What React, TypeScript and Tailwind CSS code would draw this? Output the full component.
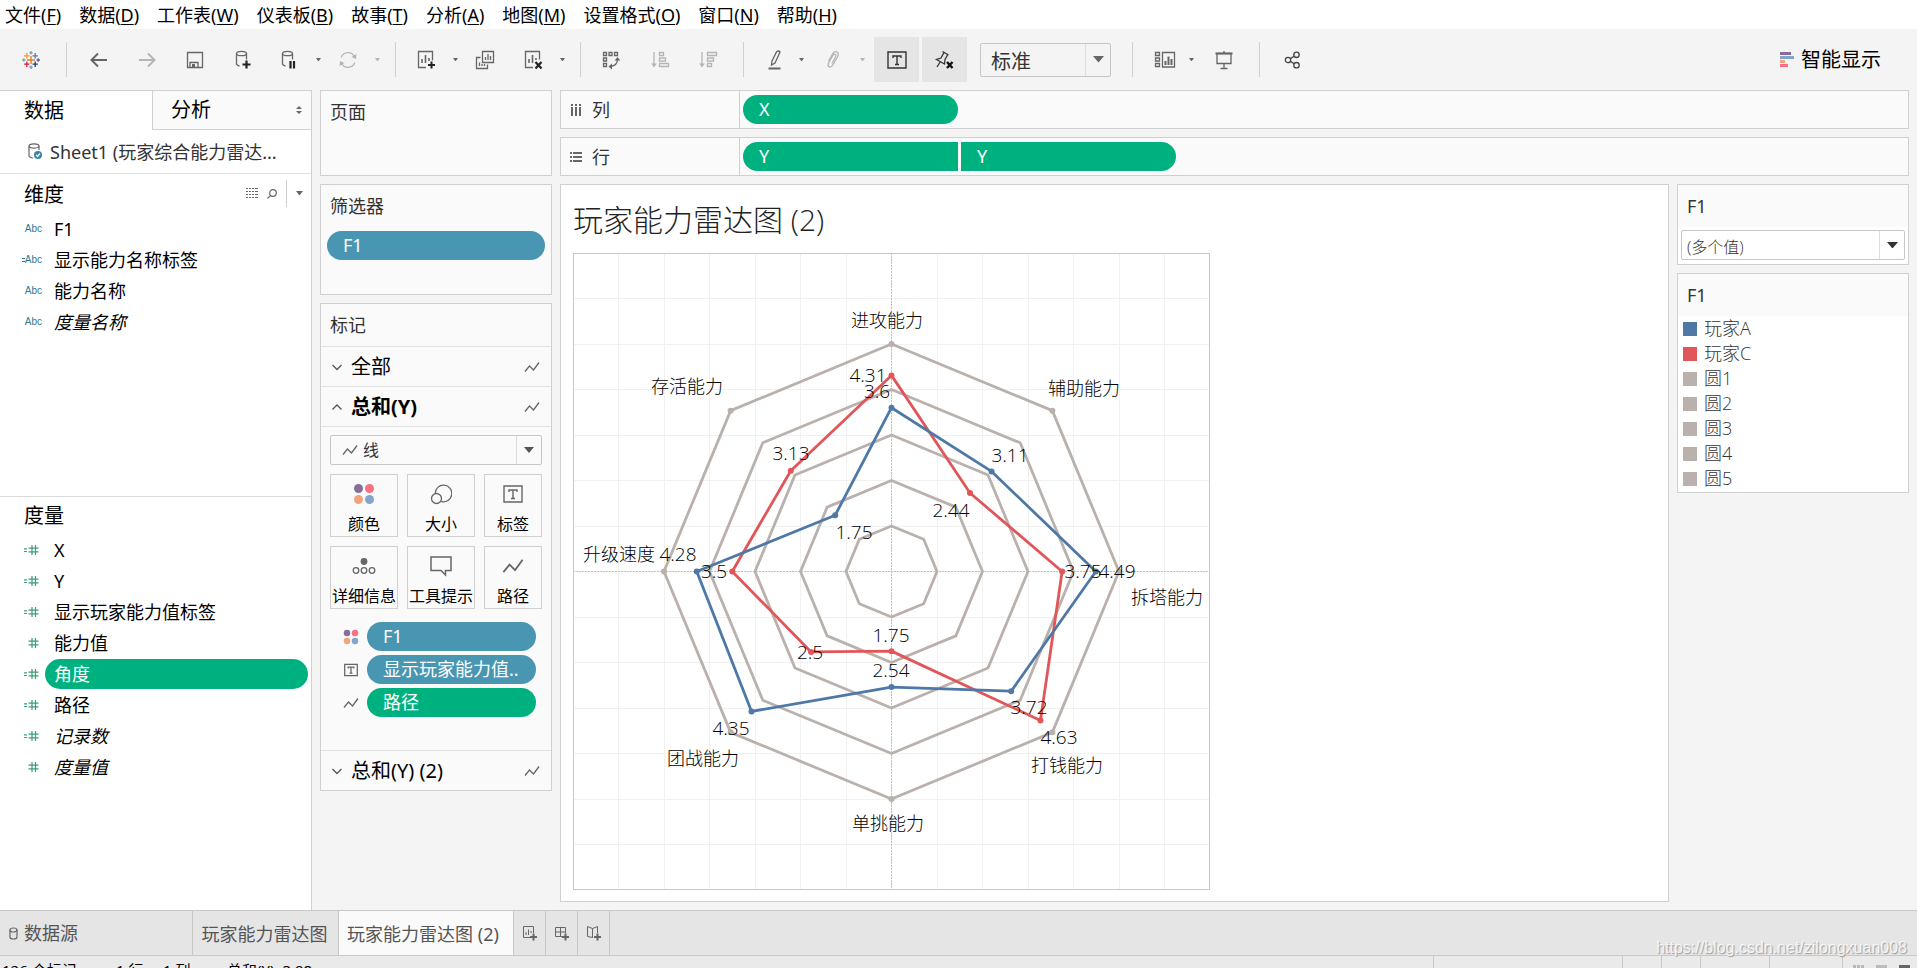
import type { ReactNode } from 'react';
import { clsx } from 'clsx';

// ─── Data ─────────────────────────────────────────────────────────────────────

const MENUS = [
  ['文件', 'F'],
  ['数据', 'D'],
  ['工作表', 'W'],
  ['仪表板', 'B'],
  ['故事', 'T'],
  ['分析', 'A'],
  ['地图', 'M'],
  ['设置格式', 'O'],
  ['窗口', 'N'],
  ['帮助', 'H'],
];

type Field = { name: string; calc?: boolean; italic?: boolean; selected?: boolean };

const DIMENSIONS: Field[] = [
  { name: 'F1' },
  { name: '显示能力名称标签', calc: true },
  { name: '能力名称' },
  { name: '度量名称', italic: true },
];

const MEASURES: Field[] = [
  { name: 'X', calc: true },
  { name: 'Y', calc: true },
  { name: '显示玩家能力值标签', calc: true },
  { name: '能力值' },
  { name: '角度', calc: true, selected: true },
  { name: '路径', calc: true },
  { name: '记录数', calc: true, italic: true },
  { name: '度量值', italic: true },
];

const LEGEND = [
  { name: '玩家A', color: 'bg-[#4e79a7]' },
  { name: '玩家C', color: 'bg-[#e15759]' },
  { name: '圆1', color: 'bg-[#bab0ac]' },
  { name: '圆2', color: 'bg-[#bab0ac]' },
  { name: '圆3', color: 'bg-[#bab0ac]' },
  { name: '圆4', color: 'bg-[#bab0ac]' },
  { name: '圆5', color: 'bg-[#bab0ac]' },
];

// clockwise, starting at the top axis
const PLAYER_A = [3.6, 3.11, 4.49, 3.72, 2.54, 4.35, 4.28, 1.75];
const PLAYER_C = [4.31, 2.44, 3.75, 4.63, 1.75, 2.5, 3.5, 3.13];

const VALUE_LABELS: [string, number, number][] = [
  ['4.31', 295, 129],
  ['3.6', 304, 145],
  ['3.13', 218, 207],
  ['3.11', 437, 209],
  ['2.44', 378, 264],
  ['1.75', 281, 286],
  ['4.28', 105, 308],
  ['3.5', 141, 325],
  ['3.75', 510, 325],
  ['4.49', 544, 325],
  ['1.75', 318, 389],
  ['2.54', 318, 424],
  ['2.5', 237, 406],
  ['3.72', 456, 461],
  ['4.63', 486, 491],
  ['4.35', 158, 482],
];

const AXIS_LABELS: [string, number, number][] = [
  ['进攻能力', 314, 74],
  ['辅助能力', 511, 142],
  ['拆塔能力', 594, 351],
  ['打钱能力', 494, 519],
  ['单挑能力', 315, 577],
  ['团战能力', 130, 512],
  ['升级速度', 46, 308],
  ['存活能力', 114, 140],
];

// ─── Icons ────────────────────────────────────────────────────────────────────

function Svg({ w = 20, h = 20, children }: { w?: number; h?: number; children: ReactNode }) {
  return (
    <svg
      width={w}
      height={h}
      viewBox={`0 0 ${w} ${h}`}
      fill="none"
      stroke="currentColor"
      strokeWidth="1.3"
      className="shrink-0"
      aria-hidden="true"
    >
      {children}
    </svg>
  );
}

function Caret({ size = 8 }: { size?: number }) {
  return (
    <svg width={size} height={size / 2 + 1} viewBox="0 0 8 5" preserveAspectRatio="none" fill="currentColor" aria-hidden="true">
      <path d="M0 0h8L4 5z" />
    </svg>
  );
}

function LogoIcon() {
  const plus = (x: number, y: number, r: number) => `M${x - r} ${y}h${r * 2}M${x} ${y - r}v${r * 2}`;
  return (
    <Svg>
      <path d={plus(10, 10, 4)} stroke="#eb7b2c" strokeWidth="1.4" />
      <path d={plus(5.8, 5.8, 2.7)} stroke="#f0972b" />
      <path d={plus(14.2, 5.8, 2.7)} stroke="#4f83a0" />
      <path d={plus(5.8, 14.2, 2.7)} stroke="#d0213a" />
      <path d={plus(14.2, 14.2, 2.7)} stroke="#1f3f77" />
      <path d={plus(10, 2.8, 1.7)} stroke="#7aa0ac" />
      <path d={plus(10, 17.2, 1.7)} stroke="#8696c0" />
      <path d={plus(2.8, 10, 1.7)} stroke="#7aa7b8" />
      <path d={plus(17.2, 10, 1.7)} stroke="#545f9c" />
    </Svg>
  );
}

const ArrowLeft = () => (
  <Svg>
    <path d="M18 10H3M9 3.5L2.5 10L9 16.5" strokeWidth="2" />
  </Svg>
);

const ArrowRight = () => (
  <Svg>
    <path d="M2 10h15M11 3.5l6.5 6.5l-6.5 6.5" strokeWidth="2" />
  </Svg>
);

const SaveIcon = () => (
  <Svg>
    <path d="M2.5 2.5h15v15h-15zM5 17.5v-5h8v5" />
    <path d="M7 14h3v3.5H7z" fill="currentColor" stroke="none" />
  </Svg>
);

const CylinderPath = () => (
  <>
    <ellipse cx="8.5" cy="4.5" rx="5" ry="2.2" />
    <path d="M3.5 4.5v10.500q.5 1.5 3 2M13.5 4.5v6" />
  </>
);

const DataAddIcon = () => (
  <Svg h={22}>
    <CylinderPath />
    <path d="M13.5 11.5v8M9.5 15.5h8" stroke="#222" strokeWidth="2.2" />
  </Svg>
);

const DataPauseIcon = () => (
  <Svg h={22}>
    <CylinderPath />
    <path d="M11.5 12v7.5M15 12v7.5" stroke="#222" strokeWidth="2.2" />
  </Svg>
);

const RefreshIcon = () => (
  <Svg>
    <path d="M3.2 7.5a7.2 7.2 0 0 1 13.4-.5M16.8 12.5a7.2 7.2 0 0 1-13.4.5" />
    <path d="M18.5 4l-.5 5l-4.5-2zM1.5 16l.5-5l4.5 2z" fill="currentColor" stroke="none" />
  </Svg>
);

const NewSheetIcon = () => (
  <Svg h={22}>
    <path d="M10 18.5H2.5v-16h14v9" />
    <path d="M6 14v-4M9.5 14V6M13 12V9" strokeWidth="1.6" />
    <path d="M15.5 12.5v7M12 16h7" stroke="#222" strokeWidth="2" />
  </Svg>
);

const DuplicateIcon = () => (
  <Svg>
    <path d="M7.5 1.5h11v11h-11zM5.5 7.5h-4v11h11v-4" />
    <path d="M10.5 10V7M13 10V4M15.5 10V6M4.5 16v-3.5M7 16v-2M9.5 16v-2" />
  </Svg>
);

const ClearSheetIcon = () => (
  <Svg h={22}>
    <path d="M10 18.5H2.5v-16h14v8" />
    <path d="M6 14v-4M9.5 14V6M13 11V9" strokeWidth="1.6" />
    <path d="M12.5 13l6 6.5M18.5 13l-6 6.5" stroke="#222" strokeWidth="2.2" />
  </Svg>
);

const SwapIcon = () => (
  <Svg>
    <path d="M2.5 2.5h3v3h-3zM8 2.5h3v3H8zM13.5 2.5h3v3h-3zM2.5 8h3v3h-3zM2.5 13.5h3v3h-3z" />
    <path d="M16.5 9q0 6.5-7 7.5" />
    <path d="M13.7 10.5l2.8-3.5l2.8 3.5zM11 13.5l-3.5 3l3.5 3z" fill="currentColor" stroke="none" />
  </Svg>
);

const SortAscIcon = () => (
  <Svg>
    <path d="M4 2v13M9.5 2.5h4v3h-4zM9.5 8h6v3h-6zM9.5 13.5h9v3h-9z" />
    <path d="M1.2 13.5h5.6L4 17.5z" fill="currentColor" stroke="none" />
  </Svg>
);

const SortDescIcon = () => (
  <Svg>
    <path d="M4 2v13M9.5 2.5h9v3h-9zM9.5 8h6v3h-6zM9.5 13.5h4v3h-4z" />
    <path d="M1.2 13.5h5.6L4 17.5z" fill="currentColor" stroke="none" />
  </Svg>
);

const PencilIcon = () => (
  <Svg h={22}>
    <path d="M11.5 3q2-2 3.5 0L10 14l-3.5 2l.5-4z" />
    <path d="M3.5 19.5h12" strokeWidth="2" />
  </Svg>
);

const ClipIcon = () => (
  <Svg>
    <path d="M9 13.5l3.5-6.5q1-2.5-.8-2.8q-1.2 0-2 1.5L5.5 13q-1.3 3 .8 4q2 .5 3.5-2L14.5 7q2-4-.8-5.2q-2.5-.6-4 2L5.5 11" />
  </Svg>
);

const LabelIcon = ({ small = false }: { small?: boolean }) => (
  <svg
    width={small ? 14 : 20}
    height={small ? 14 : 20}
    viewBox="0 0 20 20"
    fill="none"
    stroke="currentColor"
    strokeWidth={small ? 1.8 : 1.4}
    aria-hidden="true"
  >
    <path d="M1 2h18v16H1zM6 8V6h8v2M10 6v8.5M8 14.5h4" />
  </svg>
);

const PinIcon = () => (
  <Svg w={22} h={22}>
    <path d="M8.5 2.5l6 3.5M10 3.5L7 9l-4.5 1.5l8 4.5l.5-4.5l2.8-5M6.5 12.5l-3.5 5.5" />
    <path d="M13 13l5.5 6M18.5 13L13 19" stroke="#111" strokeWidth="2.4" />
  </Svg>
);

const CardsIcon = () => (
  <Svg w={22}>
    <path d="M1.5 2.5h4v3h-4zM1.5 8h4v3h-4zM1.5 13.5h4v3h-4zM8.5 2.5h12v14.5h-12z" />
    <path d="M11.5 15v-4M14.5 15V6.5M17.5 15V9" strokeWidth="2" />
  </Svg>
);

const PresentIcon = () => (
  <Svg>
    <path d="M3 4v9.5h14V4M10 13.5v5M6.5 18.5h7M10 1v2" />
    <path d="M1.5 3.5h17" strokeWidth="2.2" />
  </Svg>
);

const ShareIcon = () => (
  <Svg>
    <circle cx="5" cy="10" r="2.7" />
    <circle cx="13.5" cy="4.8" r="2.7" />
    <circle cx="13.5" cy="15.2" r="2.7" />
    <path d="M7.3 8.6l3.9-2.4M7.3 11.4l3.9 2.4" />
  </Svg>
);

const LineIcon = ({ size = 16 }: { size?: number }) => (
  <svg width={size} height={size} viewBox="0 0 16 16" fill="none" stroke="currentColor" strokeWidth="1.3" aria-hidden="true">
    <path d="M1 12.5L5.5 7l4 4L15 3.5" />
  </svg>
);

const ColorIcon = ({ size = 22 }: { size?: number }) => (
  <svg width={size} height={size} viewBox="0 0 22 22" aria-hidden="true">
    <circle cx="5.5" cy="5.5" r="4.5" fill="#866f96" />
    <circle cx="16.5" cy="5.5" r="4.5" fill="#fb7080" />
    <circle cx="5.5" cy="16.5" r="4.5" fill="#f2a47b" />
    <circle cx="16.5" cy="16.5" r="4.5" fill="#83a5cb" />
  </svg>
);

const SizeIcon = () => (
  <Svg w={22} h={22}>
    <path d="M5.2 10.5a8.3 8.3 0 1 1 6.2 8" />
    <circle cx="6.5" cy="15.5" r="5" />
  </Svg>
);

const DetailIcon = () => (
  <Svg w={24} h={22}>
    <circle cx="12" cy="6.5" r="3.4" fill="currentColor" stroke="none" />
    <circle cx="4" cy="15.5" r="2.8" />
    <circle cx="12" cy="15.5" r="2.8" />
    <circle cx="20" cy="15.5" r="2.8" />
  </Svg>
);

const TooltipIcon = () => (
  <Svg w={22} h={22}>
    <path d="M1 2h20v13.5h-5.5V20L11 15.5H1z" strokeWidth="1.5" />
  </Svg>
);

const ChevronIcon = ({ up = false }: { up?: boolean }) => (
  <svg width="12" height="12" viewBox="0 0 12 12" fill="none" stroke="#555" strokeWidth="1.3" aria-hidden="true">
    <path d={up ? 'M1.5 8.5L6 4l4.500 4.500' : 'M1.5 4L6 8.500L10.500 4'} />
  </svg>
);

const HashIcon = ({ calc = false }: { calc?: boolean }) => (
  <svg width="16" height="12" viewBox="0 0 16 12" fill="none" stroke="#3c9f78" strokeWidth="1.2" aria-hidden="true">
    <path d="M9 1v10M12.500 1v10M5.500 4.200h10M5.500 7.800h10" />
    {calc && <path d="M1 4.800h3M1 7.500h3" />}
  </svg>
);

// ─── Toolbar ──────────────────────────────────────────────────────────────────

function Tool({ label, className, children }: { label: string; className?: string; children: ReactNode }) {
  return (
    <button type="button" aria-label={label} className={clsx('flex h-[45px] shrink-0 items-center justify-center', className)}>
      {children}
    </button>
  );
}

function ToolCaret({ label, className }: { label: string; className?: string }) {
  return (
    <button type="button" aria-label={label} className={clsx('flex h-8 w-4 shrink-0 items-center justify-center', className)}>
      <Caret size={5} />
    </button>
  );
}

function Divider({ className }: { className?: string }) {
  return <div className={clsx('h-[35px] w-px shrink-0 bg-[#d0d0d0]', className)} />;
}

function Toolbar() {
  return (
    <div className="flex h-[61px] shrink-0 items-center bg-[#f4f4f4] text-[#666]">
      <Tool label="开始" className="ml-[13px] w-9"><LogoIcon /></Tool>
      <Divider className="ml-[17px]" />
      <Tool label="撤消" className="ml-[14px] w-9"><ArrowLeft /></Tool>
      <Tool label="重做" className="ml-3 w-9 text-[#b5b5b5]"><ArrowRight /></Tool>
      <Tool label="保存" className="ml-3 w-9"><SaveIcon /></Tool>
      <Tool label="新建数据源" className="ml-3 w-9"><DataAddIcon /></Tool>
      <Tool label="暂停自动更新" className="ml-[10px] w-9"><DataPauseIcon /></Tool>
      <ToolCaret label="更新选项" className="ml-[3px]" />
      <Tool label="运行更新" className="ml-1 w-9 text-[#b5b5b5]"><RefreshIcon /></Tool>
      <ToolCaret label="运行选项" className="ml-[3px] text-[#b5b5b5]" />
      <Divider className="ml-[10px]" />
      <Tool label="新建工作表" className="ml-3 w-9"><NewSheetIcon /></Tool>
      <ToolCaret label="新建选项" className="ml-[3px]" />
      <Tool label="复制" className="ml-1 w-9"><DuplicateIcon /></Tool>
      <Tool label="清除工作表" className="ml-3 w-9"><ClearSheetIcon /></Tool>
      <ToolCaret label="清除选项" className="ml-[3px]" />
      <Divider className="ml-[10px]" />
      <Tool label="交换行和列" className="ml-3 w-9"><SwapIcon /></Tool>
      <Tool label="升序排序" className="ml-[13px] w-9 text-[#b5b5b5]"><SortAscIcon /></Tool>
      <Tool label="降序排序" className="ml-3 w-9 text-[#b5b5b5]"><SortDescIcon /></Tool>
      <Divider className="ml-[17px]" />
      <Tool label="突出显示" className="ml-[13px] w-9"><PencilIcon /></Tool>
      <ToolCaret label="突出显示选项" />
      <Tool label="组成员" className="ml-1.5 w-9 text-[#b5b5b5]"><ClipIcon /></Tool>
      <ToolCaret label="组选项" className="ml-[3px] text-[#b5b5b5]" />
      <Tool label="显示标记标签" className="ml-1 w-[45px] bg-[#e5e5e5] text-[#333]"><LabelIcon /></Tool>
      <Tool label="固定轴" className="ml-[3px] w-[45px] bg-[#e5e5e5] text-[#333]"><PinIcon /></Tool>
      <div className="relative ml-[13px] h-[34px] w-[131px] shrink-0">
        <select aria-label="适合" className="h-full w-full appearance-none rounded-xs border border-[#c6c6c6] pt-0.5 pl-[10px] text-xl leading-8 text-[#333]">
          <option>标准</option>
        </select>
        <span className="pointer-events-none absolute inset-y-px right-px flex w-[25px] items-center justify-center border-l border-[#ddd]">
          <Caret size={11} />
        </span>
      </div>
      <Divider className="ml-[21px]" />
      <Tool label="显示/隐藏卡" className="ml-[14px] w-9"><CardsIcon /></Tool>
      <ToolCaret label="卡选项" />
      <Tool label="演示模式" className="ml-[7px] w-9"><PresentIcon /></Tool>
      <Divider className="ml-[17px]" />
      <Tool label="共享" className="ml-[15px] w-9 text-[#444]"><ShareIcon /></Tool>
      <button type="button" className="mr-9 ml-auto flex items-center gap-[7px] text-xl leading-7 whitespace-nowrap text-black">
        <svg width="14" height="16" viewBox="0 0 14 16" aria-hidden="true">
          <path d="M0 0h11v3H0z" fill="#866f96" />
          <path d="M0 4h14v3H0z" fill="#83a5cb" />
          <path d="M0 8h5v3H0z" fill="#f2a47b" />
          <path d="M0 12h8v3H0z" fill="#fb7080" />
        </svg>
        智能显示
      </button>
    </div>
  );
}

// ─── Data pane ────────────────────────────────────────────────────────────────

function FieldRow({ field, kind }: { field: Field; kind: 'dimension' | 'measure' }) {
  return (
    <li className="flex h-[31px] items-center pr-[3px]">
      <span className="flex w-[45px] shrink-0 justify-end pr-[3px] font-['Liberation_Sans',sans-serif] text-[10px] leading-4 text-[#2f7893]">
        {kind === 'dimension' ? (
          <span className="flex items-center">
            {field.calc && (
              <svg width="3" height="4" viewBox="0 0 3 4" stroke="currentColor" aria-hidden="true">
                <path d="M0 .5h3M0 3.5h3" />
              </svg>
            )}
            Abc
          </span>
        ) : (
          <span className="pr-[3px]"><HashIcon calc={field.calc} /></span>
        )}
      </span>
      <button
        type="button"
        className={clsx(
          'h-[30px] min-w-0 flex-1 rounded-full pl-[9px] text-left text-lg leading-[30px] whitespace-nowrap',
          field.italic && 'italic',
          field.selected ? 'bg-[#00b180] text-white' : 'text-black',
        )}
      >
        {field.name}
      </button>
    </li>
  );
}

function DataPane() {
  return (
    <aside className="flex w-[312px] shrink-0 flex-col border-t border-r border-[#d0d0d0] bg-white">
      <div className="flex h-[39px] shrink-0 text-xl leading-10 text-black">
        <button type="button" className="w-[152px] pl-6 text-left">数据</button>
        <button type="button" className="flex flex-1 items-center justify-between border-b border-l border-[#d0d0d0] bg-[#fafafa] pr-[9px] pl-[18px]">
          分析
          <svg width="6" height="8" viewBox="0 0 6 8" fill="#667" aria-hidden="true">
            <path d="M0 3l3-3l3 3zM0 5l3 3l3-3z" />
          </svg>
        </button>
      </div>
      <button type="button" className="flex h-11 shrink-0 items-center gap-2 border-b border-[#e2e2e2] pl-7 text-lg leading-6 text-[#333]">
        <svg width="14" height="17" viewBox="0 0 14 17" fill="none" stroke="#666" strokeWidth="1.2" aria-hidden="true">
          <ellipse cx="6" cy="3" rx="5" ry="2.2" />
          <path d="M1 3v10q1 2 4 2M11 3v4" />
          <circle cx="10" cy="12" r="4" fill="#3b84a3" stroke="none" />
          <path d="M8 12l1.5 1.5l2.5-3" stroke="#fff" />
        </svg>
        <span className="whitespace-nowrap">Sheet1 (玩家综合能力雷达...</span>
      </button>
      <section className="h-[323px] shrink-0 border-b border-[#dcdcdc]">
        <div className="flex h-[39px] items-center pl-6 text-[#666]">
          <h2 className="flex-1 pt-0.5 text-xl leading-7 text-black">维度</h2>
          <button type="button" aria-label="查看数据">
            <svg width="12" height="11" viewBox="0 0 12 11" fill="currentColor" aria-hidden="true">
              {[0, 3, 6, 9].map((y) => (
                <path key={y} d={`M0 ${y}h2v1H0zM3 ${y}h2v1H3zM6 ${y}h2v1H6zM9 ${y}h3v1H9z`} />
              ))}
            </svg>
          </button>
          <button type="button" aria-label="查找字段" className="ml-[9px]">
            <svg width="10" height="10" viewBox="0 0 10 10" fill="none" stroke="currentColor" strokeWidth="1.2" aria-hidden="true">
              <circle cx="6" cy="4" r="3.3" />
              <path d="M3.7 6.3L.5 9.5" />
            </svg>
          </button>
          <div className="ml-[9px] h-[27px] w-px bg-[#d0d0d0]" />
          <button type="button" aria-label="维度菜单" className="mr-2 ml-[9px]"><Caret size={7} /></button>
        </div>
        <ul>
          {DIMENSIONS.map((f) => <FieldRow key={f.name} field={f} kind="dimension" />)}
        </ul>
      </section>
      <section>
        <h2 className="h-[37px] pl-6 text-xl leading-[38px] text-black">度量</h2>
        <ul>
          {MEASURES.map((f) => <FieldRow key={f.name} field={f} kind="measure" />)}
        </ul>
      </section>
    </aside>
  );
}

// ─── Pages / filters / marks ──────────────────────────────────────────────────

function MarksCard({ label, children }: { label: string; children: ReactNode }) {
  return (
    <button type="button" className="flex h-[63px] flex-col items-center justify-between border border-[#d0d0d0] pt-2 text-[#666]">
      <span className="flex h-[22px] items-center">{children}</span>
      <span className="text-base leading-6 whitespace-nowrap text-black">{label}</span>
    </button>
  );
}

function MarksHeader({ label, up, bold }: { label: string; up?: boolean; bold?: boolean }) {
  return (
    <button
      type="button"
      className={clsx(
        'flex h-10 w-full items-center border-t border-[#e2e2e2] pr-[11px] pl-[10px] text-xl leading-7 text-black',
        bold && 'font-bold',
      )}
    >
      <ChevronIcon up={up} />
      <span className="ml-2 flex-1 text-left">{label}</span>
      <span className="text-[#666]"><LineIcon /></span>
    </button>
  );
}

function MarkPill({ label, icon, green }: { label: string; icon: ReactNode; green?: boolean }) {
  return (
    <div className="flex items-center">
      <span className="flex w-8 justify-center text-[#666]">{icon}</span>
      <button
        type="button"
        className={clsx(
          'h-[29px] w-[169px] rounded-full pl-4 text-left text-lg leading-[29px] whitespace-nowrap text-white',
          green ? 'bg-[#00b180]' : 'bg-[#4996b2]',
        )}
      >
        {label}
      </button>
    </div>
  );
}

function Shelves() {
  return (
    <div className="ml-2 flex w-[232px] shrink-0 flex-col gap-2 text-lg leading-6 text-[#333]">
      <section className="h-[86px] border border-[#d0d0d0] bg-[#fafafa] px-[9px] pt-[9px]">页面</section>
      <section className="h-[111px] border border-[#d0d0d0] bg-[#fafafa]">
        <h3 className="px-[9px] pt-[9px]">筛选器</h3>
        <div className="px-1.5 pt-[13px]">
          <button type="button" className="block h-[29px] w-full rounded-full bg-[#4996b2] pl-4 text-left leading-[29px] text-white">F1</button>
        </div>
      </section>
      <section className="border border-[#d0d0d0] bg-[#fafafa]">
        <h3 className="h-[42px] px-[9px] leading-[42px]">标记</h3>
        <MarksHeader label="全部" />
        <MarksHeader label="总和(Y)" up bold />
        <div className="border-t border-[#e2e2e2] px-[9px] pt-2">
          <div className="relative h-[30px]">
            <select aria-label="标记类型" className="h-full w-full appearance-none rounded-xs border border-[#c6c6c6] pl-8 text-base leading-7 text-[#333]">
              <option>线</option>
            </select>
            <span className="pointer-events-none absolute inset-y-0 left-3 flex items-center text-[#666]"><LineIcon /></span>
            <span className="pointer-events-none absolute inset-y-px right-px flex w-[25px] items-center justify-center border-l border-[#ddd] text-[#555]">
              <Caret size={10} />
            </span>
          </div>
          <div className="mt-[9px] grid grid-cols-[68px_68px_1fr] gap-[9px]">
            <MarksCard label="颜色"><ColorIcon /></MarksCard>
            <MarksCard label="大小"><SizeIcon /></MarksCard>
            <MarksCard label="标签"><LabelIcon /></MarksCard>
            <MarksCard label="详细信息"><DetailIcon /></MarksCard>
            <MarksCard label="工具提示"><TooltipIcon /></MarksCard>
            <MarksCard label="路径"><LineIcon size={22} /></MarksCard>
          </div>
          <div className="mt-[13px] mb-[33px] flex flex-col gap-1 pl-[5px]">
            <MarkPill label="F1" icon={<ColorIcon size={16} />} />
            <MarkPill label="显示玩家能力值.." icon={<LabelIcon small />} />
            <MarkPill label="路径" icon={<LineIcon />} green />
          </div>
        </div>
        <MarksHeader label="总和(Y) (2)" />
      </section>
    </div>
  );
}

// ─── Radar chart ──────────────────────────────────────────────────────────────

const SIZE = 637;
const C = SIZE / 2;
const UNIT = SIZE / 14;

function toPoint(value: number, i: number): [number, number] {
  const a = (i * Math.PI) / 4;
  return [C + Math.sin(a) * value * UNIT, C - Math.cos(a) * value * UNIT];
}

function RadarLine({ values, color, dots = true }: { values: number[]; color: string; dots?: boolean }) {
  const points = values.map(toPoint);
  return (
    <g>
      <polygon points={points.map((p) => p.join(',')).join(' ')} fill="none" stroke={color} strokeWidth="2.8" strokeLinejoin="round" />
      {dots && points.map(([x, y], i) => <circle key={i} cx={x} cy={y} r="3" fill={color} />)}
    </g>
  );
}

function RadarChart() {
  const grid = Array.from({ length: 13 }, (_, i) => Math.floor((i + 1) * UNIT) + 0.5);
  return (
    <svg width={SIZE} height={SIZE} viewBox={`0 0 ${SIZE} ${SIZE}`} role="img" aria-label="玩家能力雷达图">
      {grid.map((p) => (
        <path key={p} d={`M${p} 0V${SIZE}M0 ${p}H${SIZE}`} stroke="#f1f1f1" />
      ))}
      <path d={`M${C} 0V${SIZE}M0 ${C}H${SIZE}`} stroke="#c0c0c0" strokeDasharray="2 1" />
      {[1, 2, 3, 4, 5].map((r) => (
        <RadarLine key={r} values={Array(8).fill(r)} color="#bab0ac" dots={r === 5} />
      ))}
      <RadarLine values={PLAYER_C} color="#e15759" />
      <RadarLine values={PLAYER_A} color="#4e79a7" />
      <g textAnchor="middle" fill="#000" className="font-['Open_Sans','Noto_Sans_CJK_SC',sans-serif] font-light">
        {VALUE_LABELS.map(([t, x, y]) => (
          <text key={`${t}-${x}`} x={x} y={y} fontSize="19">{t}</text>
        ))}
        {AXIS_LABELS.map(([t, x, y]) => (
          <text key={t} x={x} y={y} fontSize="18">{t}</text>
        ))}
      </g>
      <rect x="0.5" y="0.5" width={SIZE - 1} height={SIZE - 1} fill="none" stroke="#c8c8c8" />
    </svg>
  );
}

// ─── Canvas ───────────────────────────────────────────────────────────────────

function Shelf({ label, icon, children }: { label: string; icon: ReactNode; children: ReactNode }) {
  return (
    <div className="flex h-[39px] shrink-0 items-center border border-[#d0d0d0] bg-[#fafafa]">
      <div className="flex h-full w-[179px] shrink-0 items-center gap-[10px] border-r border-[#d0d0d0] pl-[9px] text-lg leading-6 text-[#333]">
        {icon}
        {label}
      </div>
      <div className="flex gap-[3px] pl-[3px] text-lg leading-[29px] text-white">{children}</div>
    </div>
  );
}

function Canvas() {
  return (
    <main className="mr-2 ml-2 flex min-w-0 flex-1 flex-col gap-2">
      <Shelf
        label="列"
        icon={
          <svg width="12" height="12" viewBox="0 0 12 12" stroke="#666" strokeWidth="2" aria-hidden="true">
            <path d="M2 3v9M6 3v9M10 3v9M2 0v2M6 0v2M10 0v2" />
          </svg>
        }
      >
        <button type="button" className="w-[215px] rounded-full bg-[#00b180] pl-4 text-left">X</button>
      </Shelf>
      <Shelf
        label="行"
        icon={
          <svg width="12" height="12" viewBox="0 0 12 12" stroke="#666" strokeWidth="2" aria-hidden="true">
            <path d="M3 2h9M3 6h9M3 10h9M0 2h2M0 6h2M0 10h2" />
          </svg>
        }
      >
        <button type="button" className="w-[215px] rounded-l-full bg-[#00b180] pl-4 text-left">Y</button>
        <button type="button" className="w-[215px] rounded-r-full bg-[#00b180] pl-4 text-left">Y</button>
      </Shelf>
      <div className="mb-2 flex min-h-0 flex-1 gap-2">
        <section className="min-w-0 flex-1 border border-[#d0d0d0] bg-white pt-[15px] pl-3">
          <h1 className="mb-[13px] font-['Open_Sans','Noto_Sans_CJK_SC',sans-serif] text-3xl leading-10 font-light text-[#222]">
            玩家能力雷达图 (2)
          </h1>
          <RadarChart />
        </section>
        <aside className="flex w-[232px] shrink-0 flex-col gap-2 text-[#333]">
          <section className="border border-[#d0d0d0] bg-white">
            <h3 className="h-[42px] bg-[#fafafa] pl-[9px] text-lg leading-[42px]">F1</h3>
            <div className="relative mx-[3px] mt-[3px] mb-1 h-[30px]">
              <select
                aria-label="F1 筛选器"
                className="h-full w-full appearance-none rounded-xs border border-[#c6c6c6] bg-white pt-0.5 pl-[5px] font-['Open_Sans','Noto_Sans_CJK_SC',sans-serif] text-base leading-7 font-light text-[#333]"
              >
                <option>(多个值)</option>
              </select>
              <span className="pointer-events-none absolute inset-y-px right-px flex w-[25px] items-center justify-center border-l border-[#ddd] text-[#333]">
                <Caret size={11} />
              </span>
            </div>
          </section>
          <section className="border border-[#d0d0d0] bg-white">
            <h3 className="h-[42px] bg-[#fafafa] pl-[9px] text-lg leading-[42px]">F1</h3>
            <ul className="pb-px font-['Open_Sans','Noto_Sans_CJK_SC',sans-serif] text-lg font-light text-[#333]">
              {LEGEND.map((item) => (
                <li key={item.name} className="flex h-[25px] items-center gap-[7px] pl-[5px] leading-[25px]">
                  <span className={clsx('size-[14px]', item.color)} />
                  {item.name}
                </li>
              ))}
            </ul>
          </section>
        </aside>
      </div>
    </main>
  );
}

// ─── Bottom bars ──────────────────────────────────────────────────────────────

function SheetTabs() {
  const add = 'flex w-8 items-center justify-center border-r border-[#c8c8c8] text-[#666]';
  return (
    <nav className="flex h-[46px] shrink-0 border-t border-b border-[#c8c8c8] bg-[#e5e5e5] text-lg leading-[46px] whitespace-nowrap text-[#555]">
      <button type="button" className="flex w-[193px] items-center gap-1.5 border-r border-[#c8c8c8] pl-[9px]">
        <svg width="9" height="13" viewBox="0 0 9 13" fill="none" stroke="#666" strokeWidth="1.2" aria-hidden="true">
          <ellipse cx="4.5" cy="3" rx="3.5" ry="2" />
          <path d="M1 3v7q0 2 3.5 2t3.5-2V3" />
        </svg>
        数据源
      </button>
      <button type="button" className="w-[146px] border-r border-[#c8c8c8] pr-0.5">玩家能力雷达图</button>
      <button type="button" className="w-[175px] border-r border-[#c8c8c8] bg-[#fafafa] pr-1.5">玩家能力雷达图 (2)</button>
      <button type="button" aria-label="新建工作表" className={add}>
        <svg width="16" height="16" viewBox="0 0 16 16" fill="none" stroke="currentColor" aria-hidden="true">
          <path d="M8 12.5H1.5v-11h10V8M4 10V7M6.5 10V4.5M9 8V6" />
          <path d="M11.5 8.5v7M8 12h7" strokeWidth="2" />
        </svg>
      </button>
      <button type="button" aria-label="新建仪表板" className={add}>
        <svg width="16" height="16" viewBox="0 0 16 16" fill="none" stroke="currentColor" aria-hidden="true">
          <path d="M8 11.5H1.5v-9h10V8M1.5 7h10M6.5 2.5v9" />
          <path d="M11.5 8.5v7M8 12h7" strokeWidth="2" />
        </svg>
      </button>
      <button type="button" aria-label="新建故事" className={add}>
        <svg width="16" height="16" viewBox="0 0 16 16" fill="none" stroke="currentColor" aria-hidden="true">
          <path d="M7 12.5L1.5 11.5v-10L6.5 3.5l5-2V8M6.5 3.5v9" />
          <path d="M11.5 8.5v7M8 12h7" strokeWidth="2" />
        </svg>
      </button>
    </nav>
  );
}

function StatusBar() {
  return (
    <footer className="flex h-3 shrink-0 items-start overflow-hidden bg-[#eaeaea] text-[15px] leading-7 whitespace-nowrap text-black">
      <span className="w-[116px] pl-0.5">126 个标记</span>
      <span className="w-[47px]">1 行</span>
      <span className="w-[64px]">1 列</span>
      <span className="flex-1">总和(Y): 3.98</span>
      <div className="flex h-full shrink-0 text-[#777]">
        <div className="w-[189px] border-l border-[#c8c8c8]" />
        <div className="w-[39px] border-l border-[#c8c8c8]" />
        <div className="w-[39px] border-l border-[#c8c8c8]" />
        <div className="w-[69px] border-l border-[#c8c8c8]" />
        <div className="w-[73px] border-l border-[#c8c8c8]" />
        <div className="flex w-[75px] gap-3 border-l border-[#c8c8c8] pt-[9px] pl-[10px]">
          <svg width="11" height="3" viewBox="0 0 11 3" fill="#b8b8b8" aria-hidden="true">
            <path d="M0 0h3v3H0zM4 0h3v3H4zM8 0h3v3H8z" />
          </svg>
          <div className="h-[3px] w-[11px] bg-[#bcbcbc]" />
          <div className="h-[3px] w-[11px] bg-[#666]" />
        </div>
      </div>
    </footer>
  );
}

export default function App() {
  return (
    <div className="relative flex h-screen flex-col overflow-hidden bg-[#f4f4f4] font-['Noto_Sans','Noto_Sans_CJK_SC',sans-serif]">
      <nav className="flex h-[29px] shrink-0 items-center gap-[18px] bg-white pl-[5px] text-lg leading-7 whitespace-nowrap text-black">
        {MENUS.map(([label, key]) => (
          <button key={key} type="button">
            {label}(<span className="underline underline-offset-2">{key}</span>)
          </button>
        ))}
      </nav>
      <Toolbar />
      <div className="flex min-h-0 flex-1">
        <DataPane />
        <Shelves />
        <Canvas />
      </div>
      <SheetTabs />
      <StatusBar />
      <span className="pointer-events-none absolute right-[10px] bottom-2 font-['Liberation_Sans',sans-serif] text-base leading-6 text-white/80 [text-shadow:1px_1px_1px_#999]">
        https://blog.csdn.net/zilongxuan008
      </span>
    </div>
  );
}
